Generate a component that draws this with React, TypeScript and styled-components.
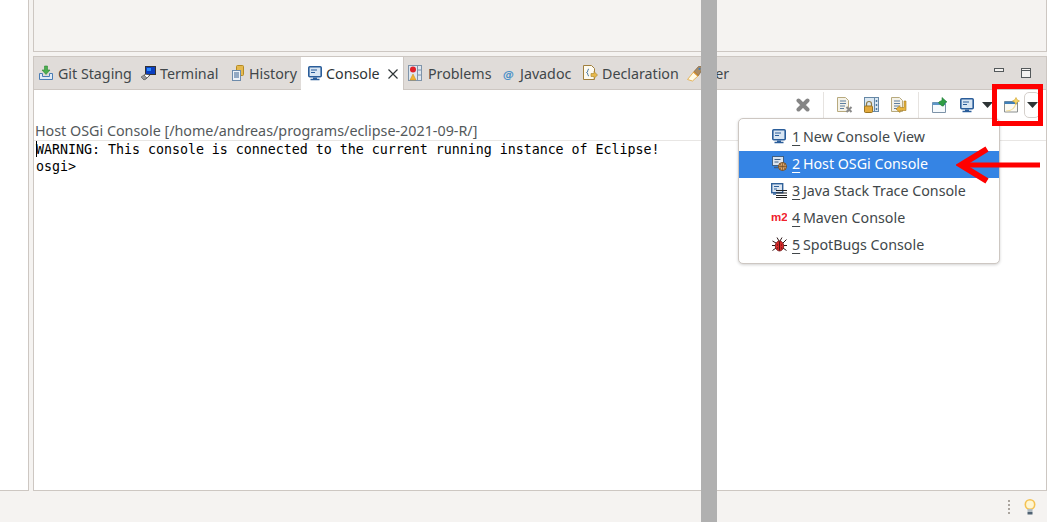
import React from 'react';
import styled, { createGlobalStyle } from 'styled-components';

const GlobalStyle = createGlobalStyle`
  html, body {
    margin: 0;
    padding: 0;
    height: 100%;
    overflow: hidden;
    background: #f5f3f1;
  }
  #root {
    height: 100%;
  }
`;

const uiFont = `"Noto Sans", "Open Sans", sans-serif`;
const border = '#cdc7c2';

const StyledPage = styled.div`
  position: relative;
  display: flex;
  flex-direction: column;
  width: 1047px;
  height: 522px;
  overflow: hidden;
  font-family: ${uiFont};
  font-size: 14.25px;
  color: #2e3436;
`;

const StyledWorkbench = styled.div`
  flex: 1;
  min-height: 0;
  display: flex;
  gap: 4px;
`;

const StyledSideColumn = styled.div`
  width: 28px;
  background: #fff;
  border-right: 1px solid ${border};
  border-bottom: 1px solid ${border};
`;

const StyledMainColumn = styled.div`
  flex: 1;
  min-width: 0;
  display: flex;
  flex-direction: column;
  gap: 4px;
`;

const StyledEditorArea = styled.div`
  height: 52px;
  box-sizing: border-box;
  border-left: 1px solid ${border};
  border-right: 1px solid ${border};
  border-bottom: 1px solid ${border};
`;

const StyledConsolePanel = styled.section`
  flex: 1;
  min-height: 0;
  display: flex;
  flex-direction: column;
  border: 1px solid ${border};
  background: #fff;
`;

const StyledTabBar = styled.div`
  height: 32px;
  display: flex;
  align-items: stretch;
  background: #e0dcd9;
  border-bottom: 1px solid ${border};
`;

const StyledTab = styled.div<{ $width: number; $active?: boolean; $iconGap?: number; $inset?: number }>`
  width: ${props => props.$width}px;
  flex: none;
  box-sizing: border-box;
  display: flex;
  align-items: center;
  gap: ${props => props.$iconGap ?? 4}px;
  padding-left: ${props => props.$inset ?? 5}px;
  white-space: nowrap;
  overflow: hidden;
  background: ${props => (props.$active ? '#fff' : 'transparent')};
  color: ${props => (props.$active ? '#2e3436' : '#41474a')};
  margin-bottom: ${props => (props.$active ? '-1px' : '0')};
  border-right: ${props => (props.$active ? `1px solid ${border}` : 'none')};
`;

const StyledTabClose = styled.span`
  display: flex;
  margin-left: 4px;
`;

const StyledWindowControls = styled.div`
  margin-left: auto;
  display: flex;
  align-items: flex-start;
  gap: 17px;
  padding: 11px 15px 0 0;
`;

const StyledToolbar = styled.div`
  height: 30px;
  display: flex;
  align-items: center;
  justify-content: flex-end;
  padding-right: 6px;
`;

const StyledToolButton = styled.span<{ $space: number }>`
  display: flex;
  margin-left: ${props => props.$space}px;
`;

const StyledToolSeparator = styled.span<{ $space: number }>`
  width: 1px;
  height: 26px;
  margin-left: ${props => props.$space}px;
  background: #e6e3e0;
`;

const StyledDropButton = styled.span`
  width: 16px;
  height: 26px;
  box-sizing: border-box;
  margin-left: 4px;
  display: flex;
  align-items: center;
  justify-content: center;
  border: 1px solid #d5d0cc;
  border-radius: 5px;
`;

const StyledConsoleName = styled.div`
  height: 21px;
  box-sizing: border-box;
  padding-left: 1px;
  line-height: 21px;
  font-size: 14.32px;
  color: #54595b;
  border-bottom: 1px solid #e8e6e4;
  white-space: nowrap;
`;

const StyledConsoleOutput = styled.pre`
  position: relative;
  margin: 0;
  padding-left: 2px;
  font-family: "DejaVu Sans Mono", monospace;
  font-size: 13.33px;
  letter-spacing: -0.03px;
  line-height: 17px;
  color: #000;
`;

const StyledCaret = styled.span`
  position: absolute;
  left: 2px;
  top: 0;
  width: 1px;
  height: 16px;
  background: #000;
`;

const StyledStatusBar = styled.footer`
  height: 31px;
  flex: none;
  display: flex;
  align-items: center;
  justify-content: flex-end;
  gap: 14px;
  padding-right: 11px;
`;

const StyledStatusGrip = styled.span`
  display: flex;
  flex-direction: column;
  gap: 2px;
  i {
    width: 2px;
    height: 2px;
    background: #aba59f;
  }
`;

const StyledMenu = styled.ul`
  position: absolute;
  left: 738px;
  top: 118px;
  width: 260px;
  margin: 0;
  padding: 5px 0 4px;
  list-style: none;
  background: #fff;
  border: 1px solid #cdc7c2;
  border-radius: 5px;
  box-shadow: 0 1px 3px rgba(0, 0, 0, 0.18);
`;

const StyledMenuItem = styled.li<{ $active?: boolean }>`
  height: 27px;
  box-sizing: border-box;
  padding: 0 0 3px 32px;
  display: flex;
  align-items: center;
  gap: 5px;
  background: ${props => (props.$active ? '#3584e4' : 'transparent')};
  color: ${props => (props.$active ? '#fff' : '#41474a')};
  white-space: nowrap;
`;

const StyledMenuKey = styled.u`
  margin-right: -1px;
  text-underline-offset: 3px;
`;

const StyledMenuIcon = styled.span`
  width: 16px;
  flex: none;
  display: flex;
  justify-content: center;
`;

const StyledDivider = styled.div`
  position: absolute;
  left: 701px;
  top: 0;
  width: 16px;
  height: 522px;
  background: #b0b0b0;
`;

const StyledHighlightBox = styled.div`
  position: absolute;
  left: 992px;
  top: 84px;
  width: 41px;
  height: 32px;
  border: 5px solid #f00;
`;

const StyledArrow = styled.svg`
  position: absolute;
  left: 956px;
  top: 146px;
`;

const Icon = ({ children, w = 16, h = 16 }: { children: React.ReactNode; w?: number; h?: number }) => (
  <svg width={w} height={h} viewBox={`0 0 ${w} ${h}`} style={{ flex: 'none', display: 'block' }}>
    {children}
  </svg>
);

const GitStagingIcon = () => (
  <Icon>
    <path d="M1.500 8.500h3v3h7v-3h3v6h-13z" fill="#dfeaf5" stroke="#4a7db5" />
    <path d="M6.500 1h3v4h2.500L8 9.500 4 5h2.500z" fill="#4cae4f" stroke="#2d8a36" strokeWidth="0.6" />
  </Icon>
);

const TerminalIcon = () => (
  <Icon>
    <rect x="5.500" y="1.500" width="10" height="8" fill="#0b3fc0" stroke="#333" />
    <rect x="7" y="3" width="4" height="3" fill="#2a8cff" />
    <path d="M5 9l5 1-4 4H3z" fill="#fff" stroke="#444" strokeWidth="0.8" />
    <path d="M1 12l3-2 3 3-3 2z" fill="#999" stroke="#555" strokeWidth="0.6" />
  </Icon>
);

const HistoryIcon = () => (
  <Icon w={12} h={16}>
    <rect x="4.500" y="0.500" width="7" height="10" rx="1" fill="#e5b94e" stroke="#b58a22" />
    <rect x="0.500" y="5.500" width="8" height="10" fill="#eef3f8" stroke="#6d8bab" />
    <path d="M2 8h5M2 10h5M2 12h5" stroke="#38608f" />
  </Icon>
);

const MonitorIcon = ({ w = 14 }: { w?: number }) => (
  <Icon w={w} h={15}>
    <rect x="0.800" y="0.800" width={w - 1.6} height="10" rx="1" fill="#d9e6f3" stroke="#2a5d9a" strokeWidth="1.600" />
    <path d="M3 4h6M3 6.500h4" stroke="#2a5d9a" />
    <path d="M5 11.500h4v1.500H5z" fill="#2a5d9a" />
    <path d={`M2.500 13.500h${w - 5}`} stroke="#2a5d9a" strokeWidth="1.500" />
  </Icon>
);

const CloseGlyph = () => (
  <Icon w={10} h={10}>
    <path d="M0.500 0.500l9 9M9.500 0.500l-9 9" stroke="#2e3436" strokeWidth="1.200" />
  </Icon>
);

const ProblemsIcon = () => (
  <Icon w={14} h={16}>
    <rect x="0.500" y="0.500" width="13" height="15" fill="#dfe7ef" stroke="#7f94aa" />
    <path d="M9.500 1v14M9.500 5h4M9.500 10h4" stroke="#7f94aa" />
    <circle cx="5" cy="4.500" r="3" fill="#e0212a" />
    <path d="M2 15l3-6 3 6z" fill="#f2b233" stroke="#c98a12" strokeWidth="0.5" />
  </Icon>
);

const JavadocIcon = () => (
  <Icon w={13} h={13}>
    <text x="6.500" y="10.500" textAnchor="middle" fontFamily="DejaVu Sans" fontStyle="italic" fontWeight="700" fontSize="11" fill="#4a90c8">
      @
    </text>
  </Icon>
);

const DeclarationIcon = () => (
  <Icon>
    <path d="M1.500 0.500h8l3 3v11h-11z" fill="#fdfaf0" stroke="#a07f3c" />
    <path d="M7 4C5 4 6.500 7.500 4.500 7.500 6.500 7.500 5 11 7 11" fill="none" stroke="#4878a8" />
    <path d="M9 8.500h3V6.500l3.500 3.500-3.500 3.500v-2H9z" fill="#e6b84b" stroke="#a87f22" strokeWidth="0.6" />
  </Icon>
);

const BrushIcon = () => (
  <Icon h={17}>
    <path d="M0.500 14.500L7 6.500l4.500 4-6 5.500z" fill="#fffbe8" stroke="#e6b45a" />
    <path d="M7 6.500L11.500 1.500h3.500v3.500l-3.500 5.500z" fill="#a98a62" stroke="#7f6440" strokeWidth="0.7" />
    <circle cx="12.500" cy="3.800" r="1.100" fill="#3d7fc4" />
    <path d="M6.500 7l4.500 4" stroke="#d8902c" strokeWidth="1.400" />
  </Icon>
);

const MinimizeIcon = () => (
  <Icon w={10} h={4}>
    <rect x="0.500" y="0.500" width="9" height="3" fill="#f4f2f0" stroke="#54595b" />
  </Icon>
);

const MaximizeIcon = () => (
  <Icon w={10} h={10}>
    <rect x="0.500" y="0.500" width="9" height="9" fill="#f4f2f0" stroke="#54595b" />
    <path d="M0.500 2.500h9" stroke="#54595b" />
  </Icon>
);

const RemoveIcon = () => (
  <Icon w={14} h={14}>
    <path d="M2.500 2.500l9 9M11.500 2.500l-9 9" stroke="#858585" strokeWidth="4" strokeLinecap="round" />
  </Icon>
);

const DocLines = () => <path d="M3 4h6M3 6.500h6M3 9h5M3 11.500h4" stroke="#5d7f9f" />;

const ClearIcon = () => (
  <Icon>
    <path d="M0.500 0.500h8l3 3v11h-11z" fill="#f4f2e8" stroke="#b8aa7e" />
    <DocLines />
    <path d="M9.500 10l5 5M14.500 10l-5 5" stroke="#8a8a8a" strokeWidth="2" />
  </Icon>
);

const ScrollLockIcon = () => (
  <Icon w={15} h={16}>
    <rect x="0.500" y="0.500" width="14" height="14" fill="#dbe8f2" stroke="#6688a6" />
    <path d="M10.500 1v13" stroke="#6688a6" />
    <path d="M12.500 3v2M12.500 7v2M12.500 11v2" stroke="#4a77a0" strokeWidth="1.500" />
    <path d="M2.500 9V7a2.500 2.500 0 0 1 5 0v2" fill="none" stroke="#8d7a45" strokeWidth="1.200" />
    <rect x="0.500" y="9" width="8" height="6.500" rx="1" fill="#e2a93c" stroke="#9a7420" />
  </Icon>
);

const WordWrapIcon = () => (
  <Icon>
    <path d="M0.500 0.500h8l3 3v11h-11z" fill="#f4f2e8" stroke="#b8aa7e" />
    <DocLines />
    <path d="M13 4v6.500H9V8.500l-4 3.500 4 3.500V13.500h6V4z" fill="#e7b53f" stroke="#a5791c" strokeWidth="0.6" />
  </Icon>
);

const PinIcon = () => (
  <Icon>
    <path d="M0.500 5.500h13v10h-13z" fill="#f6fafd" stroke="#7d93a8" />
    <path d="M0.500 5.500h13v2.500h-13z" fill="#5d96c8" />
    <path d="M10 0.500l5 4.500-2 .5-1.500 3.500-1.500 0-3.500-3 1-1.500 2.500-1z" fill="#2f9e44" stroke="#1f7a35" strokeWidth="0.6" />
  </Icon>
);

const NewConsoleIcon = () => (
  <Icon>
    <path d="M0.500 4.500h13v10.500h-13z" fill="#fbfaf3" stroke="#8a8f8f" />
    <path d="M0.500 4.500h13v2.500h-13z" fill="#3f7fb8" />
    <path d="M2 14c5 0 9-3 10-8" fill="none" stroke="#f0dc9a" strokeWidth="1.200" />
    <path d="M12 0.500l1.200 2.300 2.300 1.200-2.300 1.200-1.200 2.300-1.200-2.300L8.500 4l2.300-1.200z" fill="#f6d66a" stroke="#cda12e" strokeWidth="0.6" />
  </Icon>
);

const DropArrow = () => (
  <Icon w={11} h={6}>
    <path d="M0 0h11L5.500 6z" fill="#2e3436" />
  </Icon>
);

const HostConsoleIcon = () => (
  <Icon w={15} h={15}>
    <rect x="0.500" y="0.500" width="11" height="9" fill="#dde5ee" stroke="#3f5f83" />
    <path d="M2.500 3.500h6M2.500 6h4" stroke="#3f5f83" />
    <path d="M2 11.500h7" stroke="#3f5f83" strokeWidth="1.500" />
    <circle cx="10.500" cy="10.500" r="4" fill="#e8b070" stroke="#6f4a24" />
    <path d="M6.500 10.500h8M10.500 6.500v8M8 7.500c1.500 2 1.500 4 0 6M13 7.500c-1.500 2-1.500 4 0 6" fill="none" stroke="#6f4a24" strokeWidth="0.700" />
  </Icon>
);

const StackTraceIcon = () => (
  <Icon w={16} h={15}>
    <rect x="0.700" y="0.700" width="11" height="9" fill="#dbe6f2" stroke="#2f6099" strokeWidth="1.400" />
    <path d="M3 3.500h5M3 6h3" stroke="#2f6099" />
    <path d="M2 11h3" stroke="#2f6099" strokeWidth="1.500" />
    <path d="M5 7.500h11M5 10h11M5 12.500h11M5 14.500h11" stroke="#222" strokeWidth="1.200" />
  </Icon>
);

const MavenIcon = () => (
  <Icon w={16} h={12}>
    <text x="0" y="10" fontFamily="Liberation Sans" fontWeight="700" fontSize="11.500" fill="#f0212e">
      m2
    </text>
  </Icon>
);

const BugIcon = () => (
  <Icon w={15} h={15}>
    <path d="M0.500 4l3.500 2M0 8.500h3M0.500 13.500l3.500-2.500M14.500 2.500l-3.500 3.500M15 8.500h-3M14.500 13.500l-3.500-2.500M5 0.500l2 3.500M10 0.500L8 4" stroke="#2b1414" strokeWidth="1" />
    <ellipse cx="7.500" cy="9" rx="4.200" ry="5" fill="#d92a2a" stroke="#6b1212" strokeWidth="0.800" />
    <path d="M7.500 4.500v9M5 8h1M9 8h1M5 11h1M9 11h1" stroke="#4a0c0c" strokeWidth="0.900" />
  </Icon>
);

const BulbIcon = () => (
  <Icon w={12} h={16}>
    <circle cx="6" cy="5.500" r="4.700" fill="#fff6d2" stroke="#f5c252" strokeWidth="1.600" />
    <rect x="3.500" y="10" width="5" height="3" fill="#b3bdc4" />
    <rect x="3.500" y="13" width="5" height="2.500" fill="#4f6273" />
  </Icon>
);

const tabs = [
  { label: 'Git Staging', icon: <GitStagingIcon />, width: 102, inset: 4 },
  { label: 'Terminal', icon: <TerminalIcon />, width: 90, inset: 4 },
  { label: 'History', icon: <HistoryIcon />, width: 75, inset: 6, iconGap: 5 },
];

const moreTabs = [
  { label: 'Problems', icon: <ProblemsIcon />, width: 92, inset: 4, iconGap: 6 },
  { label: 'Javadoc', icon: <JavadocIcon />, width: 80, inset: 6, iconGap: 5 },
  { label: 'Declaration', icon: <DeclarationIcon />, width: 106, inset: 6 },
  { label: 'Ver', icon: <BrushIcon />, width: 54, inset: 5, iconGap: 4 },
];

const menuItems = [
  { key: '1', label: 'New Console View', icon: <MonitorIcon /> },
  { key: '2', label: 'Host OSGi Console', icon: <HostConsoleIcon />, active: true },
  { key: '3', label: 'Java Stack Trace Console', icon: <StackTraceIcon /> },
  { key: '4', label: 'Maven Console', icon: <MavenIcon /> },
  { key: '5', label: 'SpotBugs Console', icon: <BugIcon /> },
];

export default function App() {
  return (
    <StyledPage>
      <GlobalStyle />
      <StyledWorkbench>
        <StyledSideColumn />
        <StyledMainColumn>
          <StyledEditorArea />
          <StyledConsolePanel>
            <StyledTabBar>
              {tabs.map(tab => (
                <StyledTab key={tab.label} $width={tab.width} $inset={tab.inset} $iconGap={tab.iconGap}>
                  {tab.icon}
                  {tab.label}
                </StyledTab>
              ))}
              <StyledTab $active $width={103} $inset={7}>
                <MonitorIcon />
                Console
                <StyledTabClose>
                  <CloseGlyph />
                </StyledTabClose>
              </StyledTab>
              {moreTabs.map(tab => (
                <StyledTab key={tab.label} $width={tab.width} $inset={tab.inset} $iconGap={tab.iconGap}>
                  {tab.icon}
                  {tab.label}
                </StyledTab>
              ))}
              <StyledWindowControls>
                <MinimizeIcon />
                <MaximizeIcon />
              </StyledWindowControls>
            </StyledTabBar>
            <StyledToolbar>
              <RemoveIcon />
              <StyledToolSeparator $space={13} />
              <StyledToolButton $space={13}><ClearIcon /></StyledToolButton>
              <StyledToolButton $space={11}><ScrollLockIcon /></StyledToolButton>
              <StyledToolButton $space={12}><WordWrapIcon /></StyledToolButton>
              <StyledToolSeparator $space={11} />
              <StyledToolButton $space={13}><PinIcon /></StyledToolButton>
              <StyledToolButton $space={12}><MonitorIcon /></StyledToolButton>
              <StyledToolButton $space={8}><DropArrow /></StyledToolButton>
              <StyledToolButton $space={11}><NewConsoleIcon /></StyledToolButton>
              <StyledDropButton><DropArrow /></StyledDropButton>
            </StyledToolbar>
            <StyledConsoleName>Host OSGi Console [/home/andreas/programs/eclipse-2021-09-R/]</StyledConsoleName>
            <StyledConsoleOutput>
              <StyledCaret />
              {'WARNING: This console is connected to the current running instance of Eclipse!\nosgi> '}
            </StyledConsoleOutput>
          </StyledConsolePanel>
        </StyledMainColumn>
      </StyledWorkbench>
      <StyledStatusBar>
        <StyledStatusGrip><i /><i /><i /><i /></StyledStatusGrip>
        <BulbIcon />
      </StyledStatusBar>

      <StyledDivider />
      <StyledMenu>
        {menuItems.map(item => (
          <StyledMenuItem key={item.key} $active={item.active}>
            <StyledMenuIcon>{item.icon}</StyledMenuIcon>
            <span><StyledMenuKey>{item.key}</StyledMenuKey> {item.label}</span>
          </StyledMenuItem>
        ))}
      </StyledMenu>
      <StyledHighlightBox />
      <StyledArrow width="86" height="38" viewBox="0 0 86 38">
        <path d="M84 19H6" stroke="#f00" strokeWidth="5" />
        <path d="M31 3L5 19l26 16" fill="none" stroke="#f00" strokeWidth="6" />
      </StyledArrow>
    </StyledPage>
  );
}
